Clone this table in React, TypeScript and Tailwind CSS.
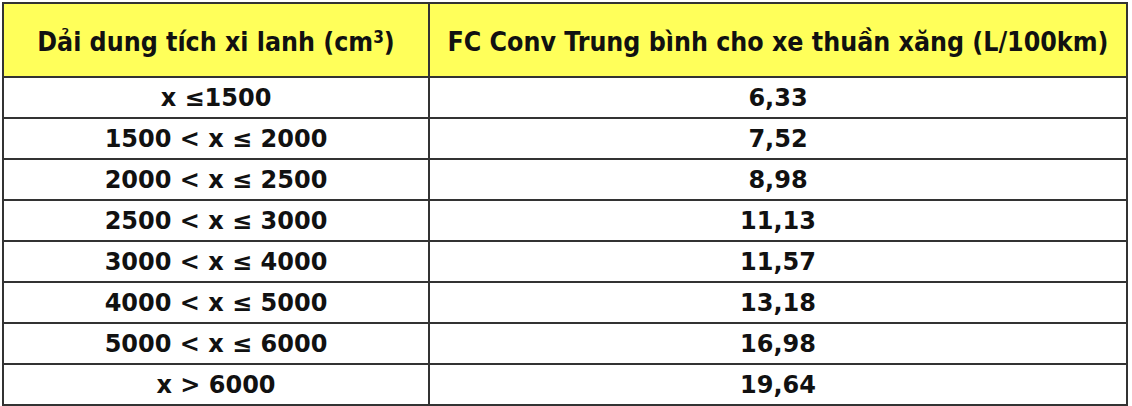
const rows: [string, string][] = [
  ['x ≤1500', '6,33'],
  ['1500 < x ≤ 2000', '7,52'],
  ['2000 < x ≤ 2500', '8,98'],
  ['2500 < x ≤ 3000', '11,13'],
  ['3000 < x ≤ 4000', '11,57'],
  ['4000 < x ≤ 5000', '13,18'],
  ['5000 < x ≤ 6000', '16,98'],
  ['x > 6000', '19,64'],
]

export default function App() {
  return (
    <div className="h-[406px] w-[1132px] bg-white pl-[2px] pt-[2px] font-['DejaVu_Sans',sans-serif] text-[#111]">
      <table className="w-[1126px] border-collapse border-2 border-[#333]">
        <thead>
          <tr className="h-[74px] bg-[#ffff5a] font-['DejaVu_Sans_Condensed','DejaVu_Sans',sans-serif]">
            <th className="w-[426px] border-2 border-[#333] pt-[4px] text-[26.5px] font-bold">
              Dải dung tích xi lanh (cm<sup className="text-[17px]">3</sup>)
            </th>
            <th className="border-2 border-[#333] pt-[4px] text-[26.5px] font-bold">
              FC Conv Trung bình cho xe thuần xăng (L/100km)
            </th>
          </tr>
        </thead>
        <tbody>
          {rows.map(([range, fc]) => (
            <tr key={range} className="h-[41px]">
              <td className="border-2 border-[#333] text-center text-[24px] font-bold">{range}</td>
              <td className="border-2 border-[#333] text-center text-[24px] font-bold">{fc}</td>
            </tr>
          ))}
        </tbody>
      </table>
    </div>
  )
}
